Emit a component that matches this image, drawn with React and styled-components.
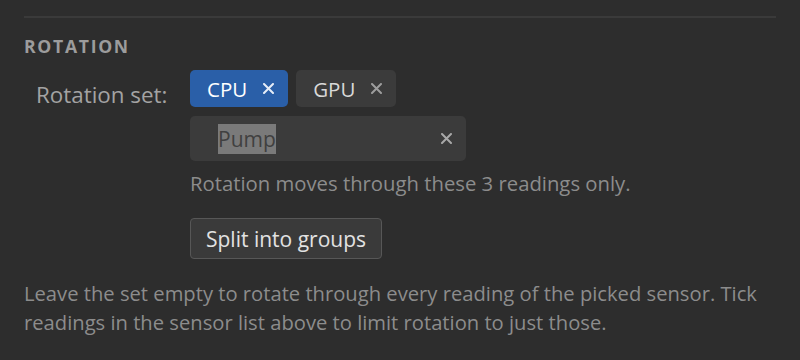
import React from "react";
import styled, { createGlobalStyle } from "styled-components";

const Global = createGlobalStyle`
  html, body { margin: 0; padding: 0; background: #2d2d2d; }
  body { font-family: "Open Sans", "Noto Sans", sans-serif; }
  * { box-sizing: border-box; }
`;

const Panel = styled.div`
  width: 800px;
  height: 360px;
  padding: 16px 24px 0 24px;
  overflow: hidden;
`;

const Divider = styled.div`
  height: 2px;
  background: #3a3a3a;
`;

const Heading = styled.h3`
  margin: 18px 0 0 0;
  font-size: 17.6px;
  font-weight: 700;
  letter-spacing: 1.7px;
  color: #9c9c9c;
  line-height: 20px;
`;

const Row = styled.div`
  display: flex;
  margin-top: 14px;
  padding-left: 12px;
`;

const Label = styled.div`
  width: 154px;
  flex: none;
  padding-top: 11px;
  font-size: 22.4px;
  line-height: 28px;
  color: #a3a3a3;
`;

const Controls = styled.div`
  display: flex;
  flex-direction: column;
  align-items: flex-start;
`;

const Chips = styled.div`
  display: flex;
  gap: 8px;
`;

const Chip = styled.div`
  display: flex;
  align-items: center;
  gap: 16px;
  height: 37px;
  padding: 0 14px 0 17px;
  border-radius: 5px;
  background: ${(p) => (p.$active ? "#2a5fa8" : "#3b3b3b")};
  color: ${(p) => (p.$active ? "#ffffff" : "#d8d8d8")};
  font-size: 20.5px;
`;

const XIcon = ({ color, size = 11 }) => (
  <svg width={size} height={size} viewBox="0 0 11 11" fill="none">
    <path d="M1 1L10 10M10 1L1 10" stroke={color} strokeWidth="2" strokeLinecap="round" />
  </svg>
);

const InputBox = styled.div`
  margin-top: 9px;
  width: 276px;
  height: 45px;
  border-radius: 5px;
  background: #3b3b3b;
  display: flex;
  align-items: center;
  justify-content: space-between;
  padding: 0 14px 0 28px;
`;

const Selected = styled.span`
  background: #7a7a7a;
  color: #404040;
  font-size: 21px;
  line-height: 30px;
  height: 30px;
  display: inline-block;
`;

const Help = styled.div`
  margin-top: 9px;
  font-size: 20.3px;
  line-height: 26px;
  color: #8c8c8c;
`;

const Button = styled.button`
  margin-top: 22px;
  height: 41px;
  padding: 0 15px;
  border: 1px solid #575757;
  border-radius: 4px;
  background: #3a3a3a;
  color: #e2e2e2;
  font-family: inherit;
  font-size: 21px;
`;

const Note = styled.p`
  margin: 20px 0 0 0;
  font-size: 20.2px;
  line-height: 29px;
  color: #8c8c8c;
`;

export default function App() {
  return (
    <>
      <Global />
      <Panel>
        <Divider />
        <Heading>ROTATION</Heading>
        <Row>
          <Label>Rotation set:</Label>
          <Controls>
            <Chips>
              <Chip $active>
                CPU <XIcon color="#e6edf7" />
              </Chip>
              <Chip>
                GPU <XIcon color="#9d9d9d" />
              </Chip>
            </Chips>
            <InputBox>
              <Selected>Pump</Selected>
              <XIcon color="#a8a8a8" />
            </InputBox>
            <Help>Rotation moves through these 3 readings only.</Help>
            <Button>Split into groups</Button>
          </Controls>
        </Row>
        <Note>
          Leave the set empty to rotate through every reading of the picked sensor. Tick readings in the sensor list above to limit rotation to just those.
        </Note>
      </Panel>
    </>
  );
}
